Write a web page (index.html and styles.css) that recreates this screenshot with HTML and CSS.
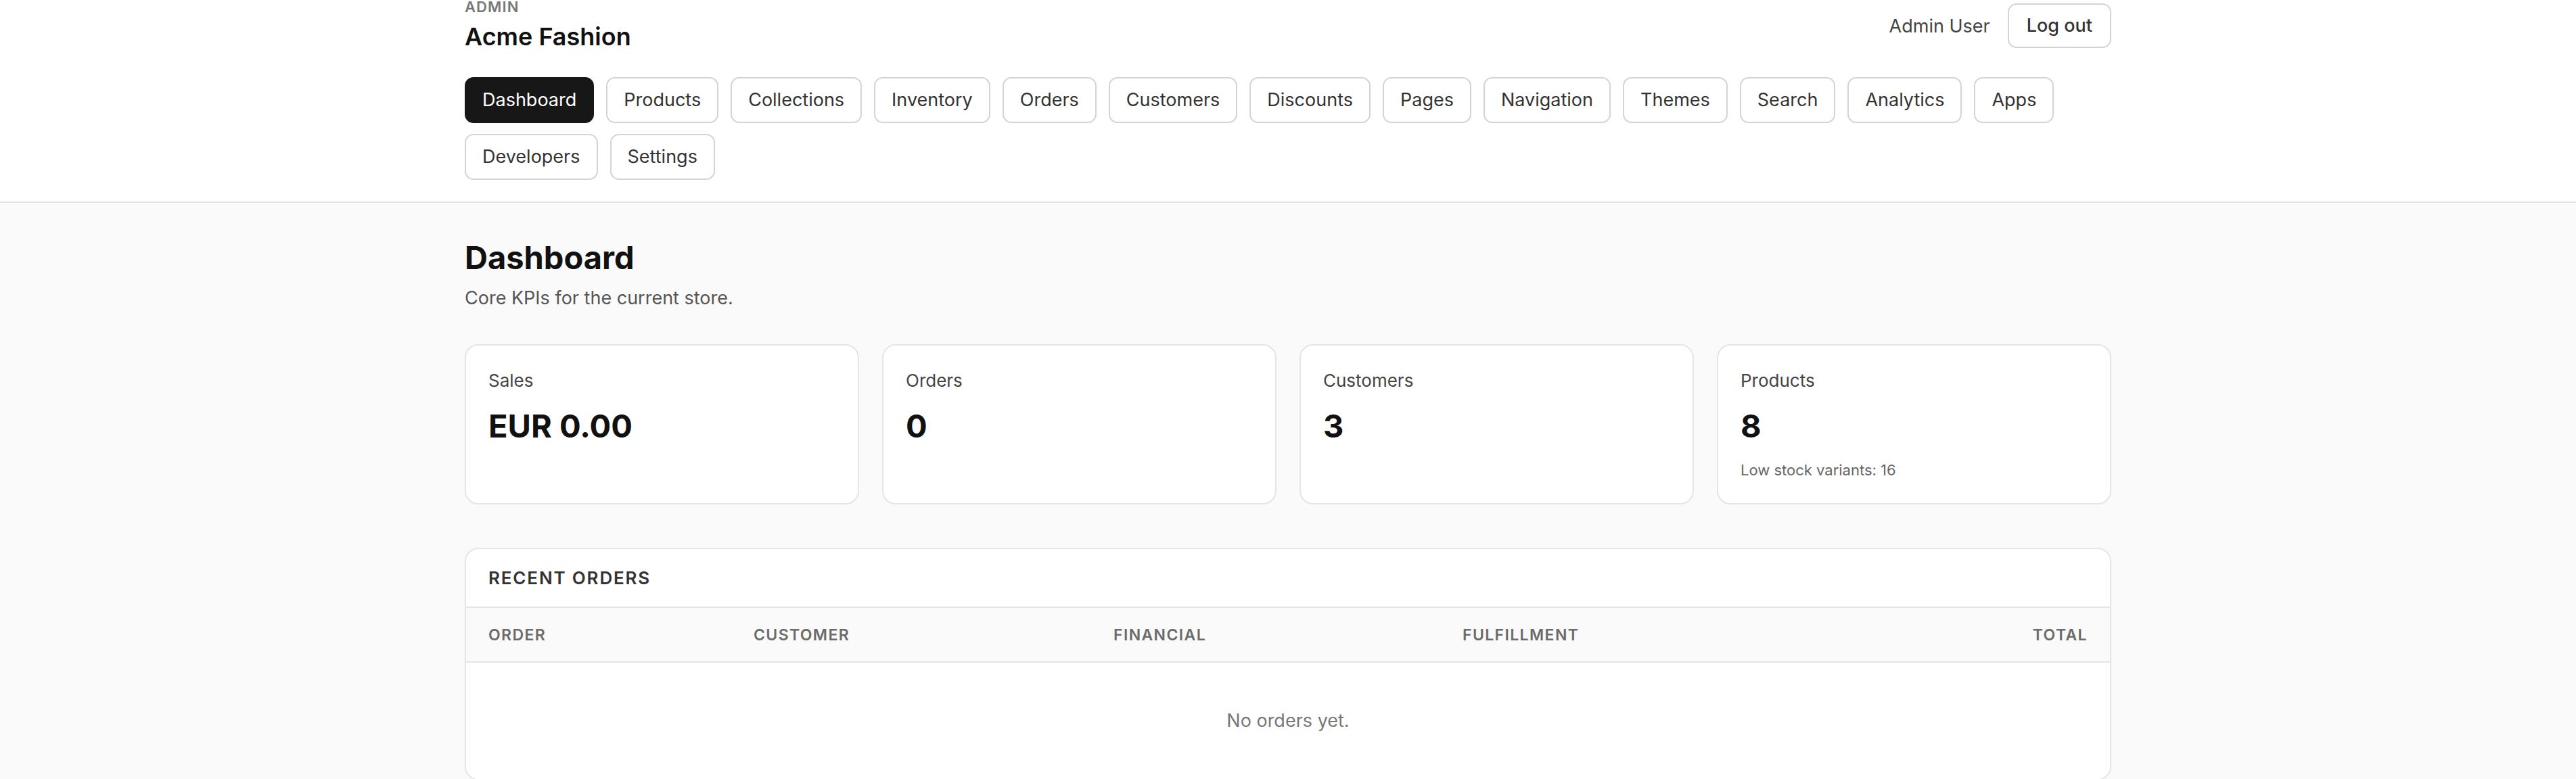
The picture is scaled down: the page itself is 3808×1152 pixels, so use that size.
FILE: index.html
```html
<!DOCTYPE html>
<html lang="en">
<head>
  <meta charset="UTF-8" />
  <meta name="viewport" content="width=device-width, initial-scale=1.0"/>
  <title>Dashboard - Acme Fashion</title>
  <link rel="stylesheet" href="styles.css">
</head>
<body>
  <header class="topbar">
    <div class="wrap">
      <div class="topbar-row">
        <div class="brand">
          <div class="brand-label">ADMIN</div>
          <div class="brand-name">Acme Fashion</div>
        </div>
        <div class="account">
          <span class="account-name">Admin User</span>
          <button class="btn btn-logout">Log out</button>
        </div>
      </div>

      <nav class="nav">
        <a class="btn active" href="#">Dashboard</a>
        <a class="btn" href="#">Products</a>
        <a class="btn" href="#">Collections</a>
        <a class="btn" href="#">Inventory</a>
        <a class="btn" href="#">Orders</a>
        <a class="btn" href="#">Customers</a>
        <a class="btn" href="#">Discounts</a>
        <a class="btn" href="#">Pages</a>
        <a class="btn" href="#">Navigation</a>
        <a class="btn" href="#">Themes</a>
        <a class="btn" href="#">Search</a>
        <a class="btn" href="#">Analytics</a>
        <a class="btn" href="#">Apps</a>
        <a class="btn" href="#">Developers</a>
        <a class="btn" href="#">Settings</a>
      </nav>
    </div>
  </header>

  <main class="wrap main">
    <h1>Dashboard</h1>
    <p class="subtitle">Core KPIs for the current store.</p>

    <div class="stats">
      <div class="stat">
        <div class="stat-label">Sales</div>
        <div class="stat-value">EUR 0.00</div>
      </div>
      <div class="stat">
        <div class="stat-label">Orders</div>
        <div class="stat-value">0</div>
      </div>
      <div class="stat">
        <div class="stat-label">Customers</div>
        <div class="stat-value">3</div>
      </div>
      <div class="stat">
        <div class="stat-label">Products</div>
        <div class="stat-value">8</div>
        <div class="stat-note">Low stock variants: 16</div>
      </div>
    </div>

    <section class="panel">
      <h2 class="panel-title">RECENT ORDERS</h2>
      <table class="orders">
        <thead>
          <tr>
            <th class="col-order">ORDER</th>
            <th class="col-customer">CUSTOMER</th>
            <th class="col-financial">FINANCIAL</th>
            <th class="col-fulfillment">FULFILLMENT</th>
            <th class="col-total">TOTAL</th>
          </tr>
        </thead>
        <tbody>
          <tr>
            <td class="empty" colspan="5">No orders yet.</td>
          </tr>
        </tbody>
      </table>
    </section>
  </main>
</body>
</html>
```

FILE: styles.css
```css
body {
  font-family: Inter, "Liberation Sans", sans-serif;
  margin: 0;
  padding: 0;
  background: #fafafa;
  color: #111;
}
.wrap {
  max-width: 2434px;
  margin: 0 auto;
}

/* header */
.topbar {
  background: white;
  border-bottom: 2px solid #e5e5e5;
  padding: 5px 0 32px;
}
.topbar-row {
  display: flex;
  justify-content: space-between;
  align-items: center;
  height: 66px;
}
.brand-label {
  font-size: 22px;
  line-height: 1;
  font-weight: 600;
  letter-spacing: 0.05em;
  color: #777;
  margin-bottom: 12px;
}
.brand-name {
  font-size: 36px;
  line-height: 1.2;
  font-weight: 600;
}
.account {
  display: flex;
  align-items: center;
  gap: 26px;
}
.account-name {
  font-size: 27px;
  color: #444;
}
.btn {
  display: inline-block;
  font-family: inherit;
  font-size: 27px;
  line-height: 42px;
  padding: 11px 24px;
  border: 2px solid #d4d4d4;
  border-radius: 13px;
  background: white;
  color: #333;
  text-decoration: none;
  cursor: pointer;
}
.btn.active {
  background: #171717;
  border-color: #171717;
  color: white;
}
.btn-logout {
  font-weight: 500;
  padding: 10px 26px;
}
.nav {
  display: flex;
  flex-wrap: wrap;
  gap: 16px 18px;
  margin-top: 43px;
}

/* page */
.main {
  padding-top: 53px;
}
h1 {
  font-size: 47px;
  line-height: 1.2;
  font-weight: 700;
  margin: 0;
}
.subtitle {
  font-size: 27px;
  line-height: 39px;
  color: #555;
  margin: 12px 0 0;
}
.stats {
  display: grid;
  grid-template-columns: repeat(4, 1fr);
  gap: 34px;
  margin-top: 49px;
}
.stat {
  background: white;
  border: 2px solid #e5e5e5;
  border-radius: 20px;
  padding: 32px 33px;
}
.stat-label {
  font-size: 26px;
  line-height: 1.5;
  color: #444;
}
.stat-value {
  font-size: 47px;
  line-height: 1.2;
  font-weight: 700;
  margin-top: 20px;
}
.stat-note {
  font-size: 22px;
  line-height: 1.5;
  color: #666;
  margin-top: 20px;
}

/* recent orders */
.panel {
  background: white;
  border: 2px solid #e5e5e5;
  border-radius: 20px;
  margin-top: 64px;
  overflow: hidden;
}
.panel-title {
  font-size: 26px;
  line-height: 1.5;
  font-weight: 600;
  letter-spacing: 0.07em;
  color: #333;
  margin: 0;
  padding: 23px 33px;
  border-bottom: 2px solid #e5e5e5;
}
.orders {
  width: 100%;
  border-collapse: collapse;
}
.orders th {
  background: #fafafa;
  font-size: 23px;
  line-height: 33px;
  font-weight: 600;
  letter-spacing: 0.06em;
  color: #6b6b6b;
  text-align: left;
  padding: 24px 33px 22px;
  border-bottom: 2px solid #e5e5e5;
}
.orders th.col-order { width: 392px; }
.orders th.col-customer { width: 532px; }
.orders th.col-financial { width: 516px; }
.orders th.col-fulfillment { width: 516px; }
.orders th.col-total { text-align: right; }
.orders th, .orders td {
  box-sizing: border-box;
}
.empty {
  text-align: center;
  font-size: 27px;
  line-height: 1.5;
  color: #777;
  padding: 66px 33px;
}
```
